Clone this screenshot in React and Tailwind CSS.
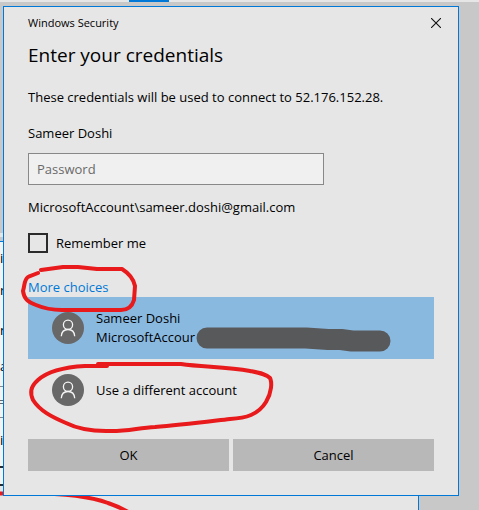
function Avatar() {
  return (
    <svg viewBox="0 0 32 32" className="h-8 w-8 shrink-0" fill="none" aria-hidden="true">
      <circle cx="16" cy="16" r="16" fill="#686868" />
      <g stroke="#f6f6f6" strokeWidth="1.3">
        <circle cx="16" cy="12.8" r="4.6" />
        <path d="M9.3 24.2C9.6 20.1 12.3 17.5 16 17.5S22.4 20.1 22.7 24.2" />
      </g>
    </svg>
  );
}

export default function App() {
  return (
    <main className="relative flex min-h-screen flex-col overflow-hidden bg-[#c8c8c8] font-['Open_Sans','Noto_Sans',sans-serif] text-[13px] leading-5 text-black">
      <div className="flex h-[2px] bg-[#e6e6e6]">
        <div className="ml-[129px] w-10 bg-[#0078d7]" />
      </div>

      <div className="absolute left-0 top-[233px] h-1 w-[3px] bg-[#e6e6e6]" />
      <div className="absolute bottom-0 left-0 right-[60px] top-[241px] overflow-hidden border-r border-t border-[#0078d7] bg-[#e6e6e6]">
        <div className="flex w-[3px] flex-col items-start bg-[#f3f3f3]">
          <span className="mt-1.5">i</span>
          <span className="mt-3">r</span>
          <span className="mt-5">n</span>
          <span className="mt-4">a</span>
          <span className="mt-2.5 flex h-8 w-[3px] items-center border-y border-[#888]">
            <span className="h-1 w-[3px] border-y border-[#666]" />
          </span>
          <span className="mt-3">i</span>
          <span className="mt-4 h-5 w-[3px] border-y-2 border-[#2b2b2b]" />
        </div>
      </div>
      <svg className="absolute left-0 top-[480px] h-[30px] w-[140px]" viewBox="0 0 140 30" fill="none" aria-hidden="true">
        <path d="M0 13.5H30C62 13.5 92 17 108 23C117 26 123 29 130 33" stroke="#e81a1c" strokeWidth="4" />
      </svg>

      <section role="dialog" aria-labelledby="title" className="relative ml-[3px] mr-5 mt-1 border border-[#0078d7] bg-[#e6e6e6] px-6 pb-6">
        <header className="flex items-center justify-between pt-1.5 text-[11px] leading-5">
          <span>Windows Security</span>
          <button type="button" aria-label="Close" className="-mr-[18px] flex h-5 w-8 items-center justify-center">
            <svg viewBox="0 0 10 10" className="h-2.5 w-2.5" stroke="#111" strokeWidth="1.1" aria-hidden="true">
              <path d="M0 0 10 10M10 0 0 10" />
            </svg>
          </button>
        </header>
        <h1 id="title" className="mt-2 text-[19px] leading-7">Enter your credentials</h1>

        <p className="mt-[18px]">These credentials will be used to connect to 52.176.152.28.</p>
        <label htmlFor="password" className="mt-4 block">Sameer Doshi</label>
        <input id="password" type="password" placeholder="Password" className="mt-2.5 block h-8 w-[296px] border border-[#888] bg-[#f0f0f0] px-2 placeholder:text-[#6a6a6a]" />
        <p className="mt-3">MicrosoftAccount\sameer.doshi@gmail.com</p>
        <label className="mt-4 flex items-center gap-2">
          <input type="checkbox" className="h-5 w-5 appearance-none border-2 border-[#2b2b2b]" />
          Remember me
        </label>
        <a href="#choices" className="mt-6 block w-fit text-[#0078d7]">More choices</a>

        <div id="choices">
          <button type="button" className="flex h-[62px] w-full items-center gap-3 bg-[#8ab9e0] pl-6 text-left">
            <Avatar />
            <span className="leading-[19px]">Sameer Doshi<br />MicrosoftAccour</span>
          </button>
          <button type="button" className="flex h-[62px] w-full items-center gap-3 pl-6 text-left">
            <Avatar />
            Use a different account
          </button>
        </div>
        <footer className="mt-[18px] grid grid-cols-2 gap-1">
          <button type="button" className="h-8 bg-[#b8b8b8]">OK</button>
          <button type="button" className="h-8 bg-[#b8b8b8]">Cancel</button>
        </footer>
      </section>

      <svg className="pointer-events-none absolute left-0 top-0 h-[510px] w-[479px]" viewBox="0 0 479 510" fill="none" strokeLinecap="round" strokeLinejoin="round" aria-hidden="true">
        <path d="M207 338H306L328 339.5H341L352 341H380" stroke="#58595b" strokeWidth="21" />
        <g stroke="#e81a1c" strokeWidth="4">
          <path d="M38 273L28 277C24 280 25 284 23 291C24 299 28 302 36 305C43 308 51 310 62 310H121C128 310 132 307 134 300L135 286C134 281 130 274 122 269H97L78 267H63L41 270" />
          <path d="M107 366H85C66 367 48 371 38 380C30 387 30 393 33 400C40 411 52 417 66 423C78 429 89 431 106 431C126 432 137 428 155 427C180 425 204 422 230 419C246 418 258 415 266 402C272 392 272 382 270 378C266 374 260 373 250 371C226 367 202 367 181 364H98" />
        </g>
      </svg>
    </main>
  );
}
